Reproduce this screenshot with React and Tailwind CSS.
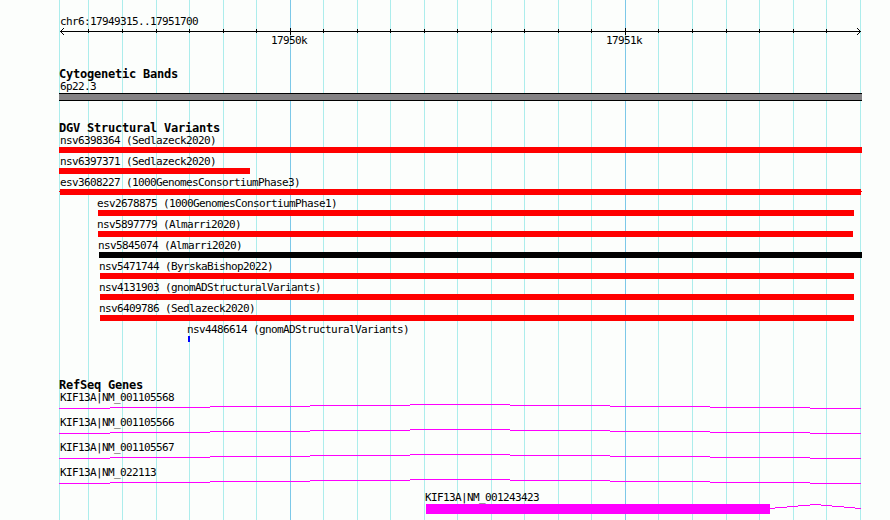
const GRID = [
  59, 88, 122, 156, 189, 223, 256, 290, 323, 357, 390, 424, 457, 491, 524, 558,
  591, 625, 658, 692, 726, 759, 793, 826, 860,
];
const MAJOR = [290, 625];

const VARIANTS = [
  { name: "nsv6398364 (Sedlazeck2020)", label: 60, start: 59, end: 862, color: "bg-[#ff0000]" },
  { name: "nsv6397371 (Sedlazeck2020)", label: 60, start: 59, end: 250, color: "bg-[#ff0000]" },
  { name: "esv3608227 (1000GenomesConsortiumPhase3)", label: 60, start: 60, end: 861, color: "bg-[#ff0000]", range: true },
  { name: "esv2678875 (1000GenomesConsortiumPhase1)", label: 97, start: 98, end: 854, color: "bg-[#ff0000]" },
  { name: "nsv5897779 (Almarri2020)", label: 97, start: 98, end: 853, color: "bg-[#ff0000]" },
  { name: "nsv5845074 (Almarri2020)", label: 98, start: 99, end: 862, color: "bg-black" },
  { name: "nsv5471744 (ByrskaBishop2022)", label: 99, start: 100, end: 854, color: "bg-[#ff0000]" },
  { name: "nsv4131903 (gnomADStructuralVariants)", label: 99, start: 100, end: 854, color: "bg-[#ff0000]" },
  { name: "nsv6409786 (Sedlazeck2020)", label: 99, start: 100, end: 854, color: "bg-[#ff0000]" },
  { name: "nsv4486614 (gnomADStructuralVariants)", label: 187, start: 188, end: 190, color: "bg-[#0000ff]" },
];

// Each intron segment is [x start, x end, y]
const INTRON = [
  [59, 110, 4], [110, 210, 3], [210, 310, 2], [310, 410, 1], [410, 510, 0],
  [510, 610, 1], [610, 710, 2], [710, 810, 3], [810, 861, 4],
];
const SHORT_INTRON = [
  [770, 775, 4], [775, 787, 3], [787, 798, 2], [798, 810, 1], [810, 821, 0],
  [821, 832, 1], [832, 844, 2], [844, 855, 3], [855, 861, 4],
];

const GENES = [
  { name: "KIF13A|NM_001105568", label: 60, intron: INTRON },
  { name: "KIF13A|NM_001105566", label: 60, intron: INTRON },
  { name: "KIF13A|NM_001105567", label: 60, intron: INTRON },
  { name: "KIF13A|NM_022113", label: 60, intron: INTRON },
  { name: "KIF13A|NM_001243423", label: 425, intron: SHORT_INTRON, exon: [426, 770] },
];

function GridLines() {
  return (
    <svg className="absolute inset-0" width="890" height="520" shapeRendering="crispEdges">
      {GRID.map((x) => (
        <rect key={x} x={x} y="0" width="1" height="520" fill={MAJOR.includes(x) ? "#7cc8e8" : "#acedec"} />
      ))}
    </svg>
  );
}

function Label({ x, children }) {
  return (
    <div className="h-[15px] pt-1 leading-[10px]" style={{ paddingLeft: x }}>
      {children}
    </div>
  );
}

function Heading({ children }) {
  return (
    <h2 className="h-[9px] pl-[59px] text-[12px] font-bold leading-[10px] tracking-[-0.224px]">
      {children}
    </h2>
  );
}

function Ruler() {
  return (
    <header className="h-[69px] pt-[17px]">
      <div className="h-[11px] pl-[60px] leading-[10px]">chr6:17949315..17951700</div>
      <svg className="block" width="890" height="7" shapeRendering="crispEdges">
        <rect x="60" y="3" width="801" height="1" />
        {GRID.slice(1, -1).map((x) =>
          MAJOR.includes(x) ? (
            <rect key={x} x={x} y="0" width="1" height="7" />
          ) : (
            <rect key={x} x={x} y="1" width="1" height="4" />
          )
        )}
        {/* Arrow heads */}
        {[0, 1, 2, 3].map((i) => (
          <g key={i}>
            <rect x={60 + i} y={3 - i} width="1" height="1" />
            <rect x={60 + i} y={3 + i} width="1" height="1" />
            <rect x={860 - i} y={3 - i} width="1" height="1" />
            <rect x={860 - i} y={3 + i} width="1" height="1" />
          </g>
        ))}
      </svg>
      <div className="flex gap-[299px] pt-px pl-[271px] leading-[10px]">
        <span className="w-9">17950k</span>
        <span className="w-9">17951k</span>
      </div>
    </header>
  );
}

function Variant({ item }) {
  return (
    <div>
      <Label x={item.label}>{item.name}</Label>
      <div className="flex h-1.5" style={{ paddingLeft: item.range ? 59 : item.start }}>
        {item.range && <div className="mt-0.5 h-px w-px bg-[#ff0000]" />}
        <div className={`h-1.5 ${item.color}`} style={{ width: item.end - item.start }} />
        {item.range && <div className="mt-0.5 h-px w-px bg-[#ff0000]" />}
      </div>
    </div>
  );
}

function Gene({ gene }) {
  return (
    <div>
      <Label x={gene.label}>{gene.name}</Label>
      <svg className="block" width="890" height="10" fill="#ff00ff" shapeRendering="crispEdges">
        {gene.intron.map(([x1, x2, y]) => (
          <rect key={x1} x={x1} y={y} width={x2 - x1} height="1" />
        ))}
        {gene.exon && <rect x={gene.exon[0]} y="0" width={gene.exon[1] - gene.exon[0]} height="10" />}
      </svg>
    </div>
  );
}

export default function App() {
  return (
    <div className="relative h-[520px] w-[890px] overflow-hidden bg-[#fcfefc] font-['DejaVu_Sans_Mono',monospace] text-[11px] tracking-[-0.622px] whitespace-pre text-black">
      <GridLines />
      <main className="relative">
        <Ruler />

        <section className="h-[54px]">
          <Heading>Cytogenetic Bands</Heading>
          <Label x={60}>6p22.3</Label>
          <div className="ml-[59px] h-2 w-[803px] border-y border-black bg-[#848284]" />
        </section>

        <section className="h-[257px]">
          <Heading>DGV Structural Variants</Heading>
          {VARIANTS.map((item) => (
            <Variant key={item.name} item={item} />
          ))}
        </section>

        <section>
          <Heading>RefSeq Genes</Heading>
          {GENES.map((gene) => (
            <Gene key={gene.name} gene={gene} />
          ))}
        </section>
      </main>
    </div>
  );
}
